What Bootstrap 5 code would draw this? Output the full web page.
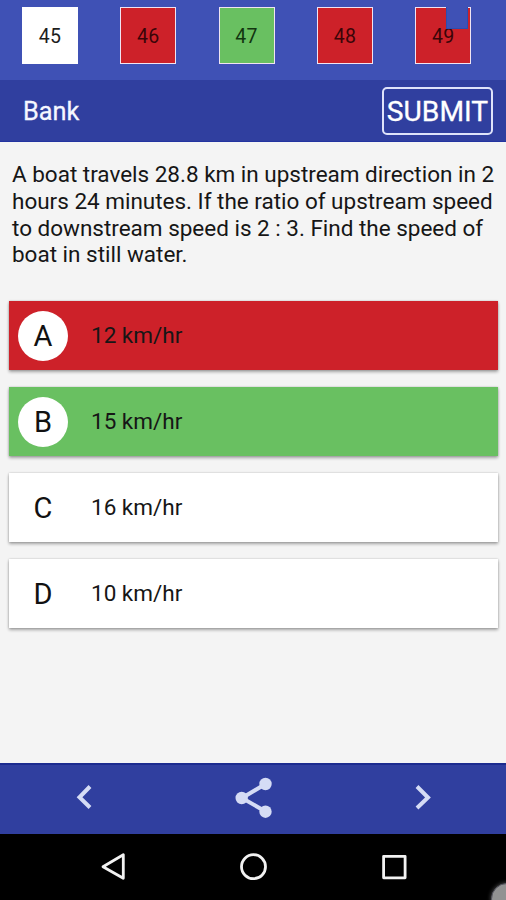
<!DOCTYPE html>
<html lang="en">
<head>
<meta charset="utf-8">
<meta name="viewport" content="width=device-width, initial-scale=1">
<title>Bank</title>
<link href="https://cdn.jsdelivr.net/npm/bootstrap@5.3.0/dist/css/bootstrap.min.css" rel="stylesheet">
<style>
body { font-family: Roboto, "Liberation Sans", sans-serif; background: #f4f4f4; color: #161616; height: 900px; }
.pager { height: 80px; background: #3f51b5; padding: 7px 0 0 22px; gap: 42.3px; }
.num { width: 56px; height: 57px; border: 1px solid #f0e4f2; font-size: 19.5px; letter-spacing: .3px; padding-top: 3px; color: #1d1d1d; }
.num-red, .opt-red { background: #cd2129; }
.num-red { color: #3a0508; }
.num-green, .opt-green { background: #69c061; }
.num-green { color: #123510; }
.num-white { background: #fff; border-color: #fff; }
.notch { position: absolute; top: -1px; right: 2px; width: 22px; height: 22px; background: #3f51b5; border: solid #2c4eae; border-width: 0 1px 1px; }
.titlebar { height: 62px; background: #303f9f; padding: 0 13px 0 23px; border-bottom: 1px solid #2334a0; color: #fff; }
.title { font-size: 25.3px; padding-top: 3px; color: #f6f7ff; -webkit-text-stroke: .3px #f6f7ff; }
.submit { width: 111px; height: 48px; border: 2px solid #dfe3fa; border-radius: 5px; font-size: 28.2px; line-height: 1; color: #fff; padding: 4px 0 0; -webkit-text-stroke: .3px #fff; }
.question { font-size: 22.5px; line-height: 26.9px; padding: 18.700px 0 0 12px; height: 159px; letter-spacing: -.01px; }
.question span { display: block; white-space: nowrap; }
.options { padding: 0 8px 0 9px; gap: 17px; }
.opt { height: 69px; box-shadow: 0 2px 3px rgba(0,0,0,.32), 0 0 2px rgba(0,0,0,.2); padding: 1px 0 0 9px; font-size: 22.5px; }
.opt-white { background: #fff; }
.letter { width: 50px; height: 50px; background: #fff; font-size: 29px; padding-top: 2px; margin-right: 23px; color: #111; }
.actions { height: 71px; background: #303f9f; border-top: 2px solid #1c2b8f; }
.sysnav { height: 66px; background: #000; }
.knob { position: absolute; left: 491px; top: 49px; width: 32px; height: 32px; background: #929292; border: 1px solid #55555f; box-shadow: 0 0 4px #555; }
</style>
</head>
<body class="d-flex flex-column overflow-hidden">
<nav class="pager d-flex flex-shrink-0">
  <div class="num num-white flex-shrink-0 d-flex align-items-center justify-content-center">45</div>
  <div class="num num-red flex-shrink-0 d-flex align-items-center justify-content-center">46</div>
  <div class="num num-green flex-shrink-0 d-flex align-items-center justify-content-center">47</div>
  <div class="num num-red flex-shrink-0 d-flex align-items-center justify-content-center">48</div>
  <div class="num num-red flex-shrink-0 d-flex align-items-center justify-content-center position-relative">49<i class="notch"></i></div>
</nav>
<header class="titlebar d-flex flex-shrink-0 align-items-center justify-content-between">
  <div class="title">Bank</div>
  <button class="submit btn d-flex align-items-center justify-content-center">SUBMIT</button>
</header>
<main class="flex-grow-1">
  <p class="question mb-0"><span>A boat travels 28.8 km in upstream direction in 2</span><span>hours 24 minutes. If the ratio of upstream speed</span><span>to downstream speed is 2 : 3. Find the speed of</span><span>boat in still water.</span></p>
  <div class="options d-flex flex-column">
    <div class="opt opt-red d-flex align-items-center"><span class="letter rounded-circle d-flex align-items-center justify-content-center">A</span><span>12 km/hr</span></div>
    <div class="opt opt-green d-flex align-items-center"><span class="letter rounded-circle d-flex align-items-center justify-content-center">B</span><span>15 km/hr</span></div>
    <div class="opt opt-white d-flex align-items-center"><span class="letter rounded-circle d-flex align-items-center justify-content-center">C</span><span>16 km/hr</span></div>
    <div class="opt opt-white d-flex align-items-center"><span class="letter rounded-circle d-flex align-items-center justify-content-center">D</span><span>10 km/hr</span></div>
  </div>
</main>
<div class="actions flex-shrink-0">
  <svg class="d-block" width="506" height="69" viewBox="0 765 506 69" fill="none" stroke="#d5dcf5" stroke-width="4">
    <path d="M90 786.500 79.500 797.300 90 807.500"/>
    <path d="M417 786.500 428 797.500 417 808"/>
    <path d="M265.500 784 242 798 265.500 811.500"/>
    <g fill="#d5dcf5" stroke="none"><circle cx="265.500" cy="784" r="6.200"/><circle cx="241.700" cy="798" r="6.200"/><circle cx="265.500" cy="811.700" r="6.200"/></g>
  </svg>
</div>
<footer class="sysnav flex-shrink-0 position-relative overflow-hidden">
  <svg class="d-block" width="506" height="66" viewBox="0 834 506 66" fill="none" stroke="#f2f2f2" stroke-width="2.800" stroke-linejoin="round">
    <path d="M123.300 854.800V878.300L103 866.700Z"/>
    <circle cx="253.500" cy="866.700" r="12"/>
    <rect x="383.600" y="856.300" width="21.500" height="21.500"/>
  </svg>
  <i class="knob rounded-circle"></i>
</footer>
</body>
</html>
